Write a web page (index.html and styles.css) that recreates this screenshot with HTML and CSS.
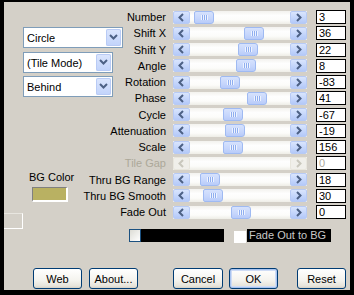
FILE: index.html
```html
<!DOCTYPE html>
<html>
<head>
    <title>Tile Options</title>
    <link rel="stylesheet" href="styles.css">
</head>
<body>
    <div class="dialog">
        <div class="main">
            <div class="side">
                <div class="combo combo-wide"><span>Circle</span><i class="drop"><svg width="15" height="17"><polyline points="4,6 7.5,9.5 11,6" fill="none" stroke="#4d6185" stroke-width="2"/></svg></i></div>
                <div class="combo combo-mid"><span>(Tile Mode)</span><i class="drop"><svg width="15" height="17"><polyline points="4,6 7.5,9.5 11,6" fill="none" stroke="#4d6185" stroke-width="2"/></svg></i></div>
                <div class="combo combo-last"><span>Behind</span><i class="drop"><svg width="15" height="17"><polyline points="4,6 7.5,9.5 11,6" fill="none" stroke="#4d6185" stroke-width="2"/></svg></i></div>
                <div class="bg-label">BG Color</div>
                <div class="swatch"></div>
                <div class="stub"></div>
            </div>

            <div class="params" id="params"></div>
        </div>

        <div class="fade-row">
            <div class="black-bar"><span class="check-grey"></span></div>
            <span class="check-white"></span>
            <span class="fade-label">Fade Out to BG</span>
        </div>

        <div class="buttons">
            <button class="btn btn-web">Web</button>
            <button class="btn btn-about">About...</button>
            <button class="btn btn-cancel">Cancel</button>
            <button class="btn btn-ok">OK</button>
            <button class="btn btn-reset">Reset</button>
        </div>
    </div>

    <script>
        // Liste des paramètres : libellé, valeur, position du curseur
        var params = [
            ['Number', '3', 4],
            ['Shift X', '36', 54],
            ['Shift Y', '22', 48],
            ['Angle', '8', 46],
            ['Rotation', '-83', 30],
            ['Phase', '41', 57],
            ['Cycle', '-67', 33],
            ['Attenuation', '-19', 35],
            ['Scale', '156', 33],
            ['Tile Gap', '0', null],
            ['Thru BG Range', '18', 10],
            ['Thru BG Smooth', '30', 13],
            ['Fade Out', '0', 41]
        ];

        var leftArrow = '<svg width="15" height="11"><polyline points="9,2 5.5,5.5 9,9" fill="none" stroke="currentColor" stroke-width="2"/></svg>';
        var rightArrow = '<svg width="15" height="11"><polyline points="6,2 9.5,5.5 6,9" fill="none" stroke="currentColor" stroke-width="2"/></svg>';

        var html = '';
        params.forEach(function(p) {
            var off = p[2] === null;
            html += '<div class="label' + (off ? ' disabled' : '') + '"><span>' + p[0] + '</span></div>';
            html += '<div class="scroll' + (off ? ' disabled' : '') + '">';
            html += '<span class="arrow">' + leftArrow + '</span>';
            html += '<span class="trough">';
            if (!off) {
                html += '<span class="thumb" style="margin-left:' + p[2] + 'px"></span>';
            }
            html += '</span>';
            html += '<span class="arrow">' + rightArrow + '</span>';
            html += '</div>';
            html += '<div class="value' + (off ? ' disabled' : '') + '">' + p[1] + '</div>';
        });
        document.getElementById('params').innerHTML = html;
    </script>
</body>
</html>
```

FILE: styles.css
```css
body {
    margin: 0;
    background: #000;
    font-family: "Liberation Sans", Arial, sans-serif;
    font-size: 11px;
    color: #000;
}

.dialog {
    box-sizing: border-box;
    width: 354px;
    height: 295px;
    background: #d4d0c8;
    border-style: solid;
    border-color: #000;
    border-width: 2px 4px 5px 4px;
    overflow: hidden;
}

.main {
    display: flex;
    padding-top: 7px;
}

/* colonne de gauche */
.side {
    width: 121px;
    flex: none;
}

.combo {
    box-sizing: border-box;
    height: 21px;
    margin-left: 19px;
    background: #fff;
    border: 1px solid #7f9db9;
    display: flex;
    align-items: center;
    justify-content: space-between;
    padding: 0 1px 0 3px;
}

.combo-wide {
    width: 100px;
    margin-top: 18px;
}

.combo-mid {
    width: 90px;
    margin-top: 4px;
}

.combo-last {
    width: 90px;
    margin-top: 3px;
}

.drop {
    display: block;
    width: 15px;
    height: 17px;
    border-radius: 2px;
    background: linear-gradient(#dce6fd, #c1d3fb);
    box-shadow: inset 0 0 0 1px #b9cbf5;
}

.drop svg {
    display: block;
}

.bg-label {
    margin: 74px 0 0 25px;
    line-height: 12px;
}

.swatch {
    box-sizing: border-box;
    width: 36px;
    height: 15px;
    margin: 4px 0 0 28px;
    background: #b9b162;
    border-style: solid;
    border-width: 1px 2px 2px 1px;
    border-color: #808080 #fff #fff #808080;
}

.stub {
    box-sizing: border-box;
    width: 19px;
    height: 16px;
    margin-top: 11px;
    border-top: 1px solid #e8e6e0;
    border-right: 1px solid #fff;
    border-bottom: 1px solid #fff;
}

/* grille des paramètres */
.params {
    display: grid;
    grid-template-columns: 48px 134px 39px;
    grid-auto-rows: 16.25px;
    align-items: center;
}

.label {
    display: flex;
    justify-content: flex-end;
    padding-right: 7px;
    white-space: nowrap;
}

.label.disabled {
    color: #aca899;
}

.scroll {
    display: flex;
    height: 13px;
    background: linear-gradient(#f3f2ee, #fefefe 35%, #fcfcfa 70%, #eeede6);
}

.arrow {
    box-sizing: border-box;
    width: 17px;
    height: 13px;
    flex: none;
    display: flex;
    align-items: center;
    justify-content: center;
    color: #4d6185;
    border: 1px solid #b7caf5;
    border-radius: 2px;
    background: linear-gradient(#d9e5fd, #c2d4fb 60%, #b4c9f8);
}

.trough {
    flex: 1;
    display: flex;
}

.thumb {
    box-sizing: border-box;
    width: 20px;
    height: 13px;
    display: flex;
    align-items: center;
    justify-content: center;
    border: 1px solid #9fbaf2;
    border-radius: 2px 3px 3px 2px;
    background: linear-gradient(#d6e2fd, #c6d6fc 60%, #b8cbf9);
}

.thumb::after {
    content: "";
    width: 7px;
    height: 5px;
    background: repeating-linear-gradient(90deg, #eef3fe 0 1px, #8faef0 1px 2px);
}

.scroll.disabled .arrow {
    color: #c9c7bd;
    border-color: #e8e6dd;
    background: #f0efea;
}

.value {
    box-sizing: border-box;
    width: 30px;
    height: 14px;
    margin-left: 9px;
    padding-left: 2px;
    line-height: 12px;
    background: #fff;
    border: 1px solid #000;
}

.value.disabled {
    color: #aca899;
}

/* ligne Fade Out to BG */
.fade-row {
    display: flex;
    align-items: center;
    height: 13px;
    margin-left: 125px;
}

.black-bar {
    width: 95px;
    height: 13px;
    background: #000;
}

.check-grey {
    box-sizing: border-box;
    display: block;
    width: 12px;
    height: 13px;
    border: 1px solid #1c5180;
    background: linear-gradient(135deg, #dcdcd5, #fff);
}

.check-white {
    width: 12px;
    height: 12px;
    margin: 2px 0 0 10px;
    background: #fff;
}

.fade-label {
    box-sizing: border-box;
    width: 84px;
    height: 13px;
    margin-left: 1px;
    padding-left: 2px;
    line-height: 13px;
    background: #000;
    color: #c8c8c8;
}

/* boutons */
.buttons {
    display: flex;
    margin-top: 26px;
}

.btn {
    box-sizing: border-box;
    width: 49px;
    height: 21px;
    padding: 0;
    font-family: "Liberation Sans", Arial, sans-serif;
    font-size: 11px;
    color: #000;
    border: 1px solid #003c74;
    border-radius: 3px;
    background: linear-gradient(#fff, #f4f3ee 60%, #e6e3da 90%, #d6d0c5);
}

.btn-web {
    margin-left: 29px;
}

.btn-about {
    margin-left: 7px;
}

.btn-cancel {
    width: 50px;
    margin-left: 35px;
}

.btn-ok {
    margin-left: 6px;
    box-shadow: inset 0 0 0 1px #a9c4f0, inset 0 0 0 2px #cfdcf5;
}

.btn-reset {
    margin-left: 19px;
}
```
